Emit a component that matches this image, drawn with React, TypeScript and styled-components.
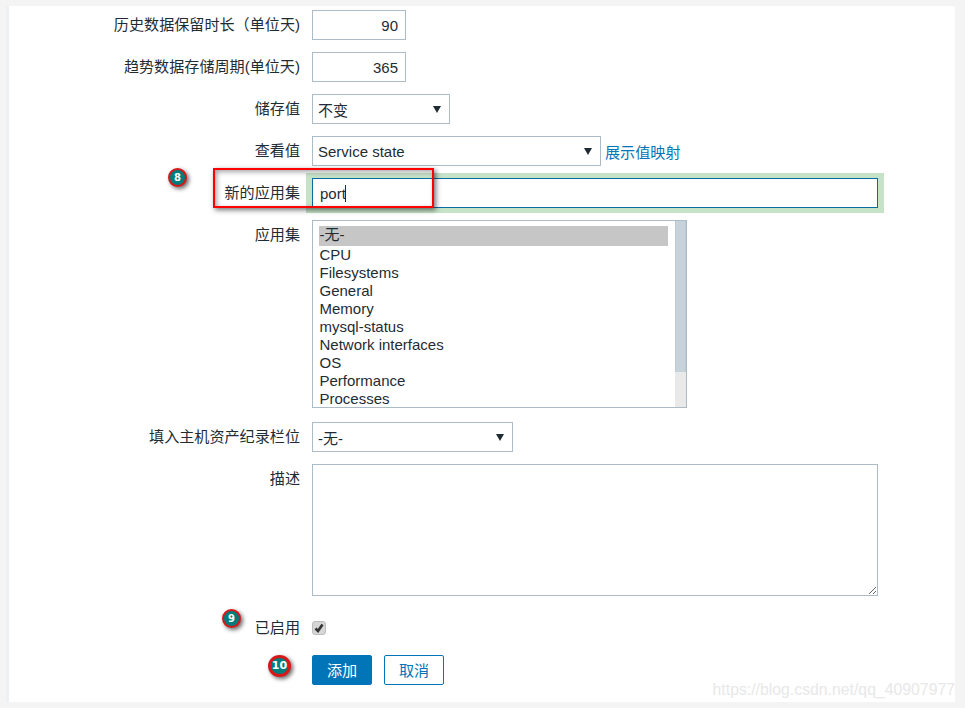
import React from "react";
import styled, { createGlobalStyle } from "styled-components";

const GlobalStyle = createGlobalStyle`
html, body {
    margin: 0;
    padding: 0;
    background: #f4f4f4;
}
body {
    font-family: "Liberation Sans", "Noto Sans CJK SC", sans-serif;
    font-size: 15px;
    color: #1f2c33;
}
input, textarea {
    font-family: inherit;
    font-size: inherit;
    color: inherit;
}
`;

const Page = styled.div`
width: 965px;
height: 708px;
box-sizing: border-box;
padding: 6px 10px 6px 6px;
overflow: hidden;
`;

const Card = styled.div`
position: relative;
height: 696px;
box-sizing: border-box;
background: #fff;
border-left: 3px solid #eef1f3;
padding-top: 4px;
display: flex;
flex-direction: column;
gap: 12px;
`;

const Row = styled.div<{ $top?: number; $bottom?: number }>`
display: grid;
grid-template-columns: 303px 1fr;
margin-top: ${props => props.$top || 0}px;
margin-bottom: ${props => props.$bottom || 0}px;
`;

const Label = styled.label<{ $drop?: number }>`
font-size: 15.1px;
line-height: 30px;
text-align: right;
padding-right: 12px;
padding-top: ${props => props.$drop || 0}px;
white-space: nowrap;
`;

const Field = styled.div`
display: flex;
align-items: center;
gap: 4px;
`;

const NumberInput = styled.input`
width: 94px;
height: 30px;
box-sizing: border-box;
border: 1px solid #acbbc5;
padding: 0 7px;
text-align: right;
outline: none;
`;

const SelectBox = styled.div<{ $width: number }>`
width: ${props => props.$width}px;
height: 30px;
box-sizing: border-box;
border: 1px solid #acbbc5;
padding: 0 8px 0 5px;
display: flex;
align-items: center;
justify-content: space-between;
`;

const Arrow = styled.svg`
width: 8px;
height: 7px;
fill: #1f2c33;
`;

const ValueLink = styled.a`
color: #0275b8;
text-decoration: none;
font-size: 15.1px;
`;

const FocusWrap = styled.div`
position: relative;
width: 566px;
`;

const FocusInput = styled.input`
display: block;
width: 100%;
height: 30px;
box-sizing: border-box;
border: 1px solid #0a6aa1;
padding: 0 7px;
outline: none;
box-shadow: 1px 0 0 5px #c6e2c7, -1px 0 0 5px #c6e2c7;
border-radius: 0;
`;

const Caret = styled.span`
position: absolute;
left: 33px;
top: 7px;
width: 1px;
height: 17px;
background: #1f2c33;
`;

const ListBox = styled.div`
width: 375px;
height: 188px;
box-sizing: border-box;
border: 1px solid #acbbc5;
display: flex;
overflow: hidden;
`;

const OptionList = styled.div`
flex: 1;
padding: 5px 7px 0 6px;
`;

const Option = styled.div<{ $selected?: boolean }>`
line-height: 18px;
white-space: nowrap;
padding-left: 0.5px;
background: ${props => props.$selected ? "#c6c6c6" : "transparent"};
height: ${props => props.$selected ? "20px" : "18px"};
`;

const ScrollTrack = styled.div`
width: 11px;
background: #e9e9e9;
`;

const ScrollThumb = styled.div`
height: 151px;
box-sizing: border-box;
background: #c8d2da;
border-right: 1px solid #bccad3;
border-left: 1px solid #bccad3;
`;

const Notes = styled.textarea`
display: block;
width: 566px;
height: 132px;
box-sizing: border-box;
border: 1px solid #acbbc5;
outline: none;
padding: 5px;
resize: both;
`;

const CheckBox = styled.div`
width: 14px;
height: 14px;
box-sizing: border-box;
border: 1px solid #bdbdbd;
border-radius: 3px;
background: #d6d6d6;
display: flex;
align-items: center;
justify-content: center;
`;

const CheckMark = styled.svg`
width: 10px;
height: 10px;
fill: none;
stroke: #333;
stroke-width: 2.6;
`;

const Button = styled.button<{ $primary?: boolean }>`
width: 60px;
height: 30px;
box-sizing: border-box;
border: 1px solid #0275b8;
border-radius: 2px;
font-family: inherit;
font-size: 15.1px;
padding: 0 0 2px;
background: ${props => props.$primary ? "#0275b8" : "#fff"};
color: ${props => props.$primary ? "#fff" : "#0275b8"};
`;

const Buttons = styled.div`
display: flex;
gap: 12px;
`;

const RedBox = styled.div`
position: absolute;
left: 204px;
top: 162px;
width: 221px;
height: 40px;
box-sizing: border-box;
border: 2px solid #f00;
box-shadow: 2px 2px 5px rgba(0, 0, 0, 0.55), inset 2px 2px 5px rgba(0, 0, 0, 0.35);
`;

const Badge = styled.div<{ $left: number; $top: number; $large?: boolean }>`
position: absolute;
left: ${props => props.$left}px;
top: ${props => props.$top}px;
width: ${props => props.$large ? 23 : 19}px;
height: ${props => props.$large ? 22 : 19}px;
box-sizing: border-box;
border: ${props => props.$large ? 3 : 2}px solid #d81818;
border-radius: 50%;
background: #007c7c;
color: #fff;
font-family: "DejaVu Sans", sans-serif;
font-size: ${props => props.$large ? 11 : 10}px;
font-weight: bold;
line-height: ${props => props.$large ? 16 : 15}px;
text-align: center;
box-shadow: 2px 2px 4px rgba(0, 0, 0, 0.6);
`;

const Watermark = styled.div`
position: absolute;
right: 0;
bottom: 3px;
font-size: 15.8px;
color: #e8e8e8;
white-space: nowrap;
`;

const apps = ["CPU", "Filesystems", "General", "Memory", "mysql-status", "Network interfaces", "OS", "Performance", "Processes"];

const DownArrow = () => (
    <Arrow viewBox="0 0 8 7"><path d="M0 0h8L4 7z" /></Arrow>
);

const App = () => {
    return (
        <Page>
            <GlobalStyle />
            <Card>
                <Row>
                    <Label>历史数据保留时长（单位天)</Label>
                    <Field><NumberInput readOnly defaultValue="90" /></Field>
                </Row>
                <Row>
                    <Label>趋势数据存储周期(单位天)</Label>
                    <Field><NumberInput readOnly defaultValue="365" /></Field>
                </Row>
                <Row>
                    <Label>储存值</Label>
                    <Field><SelectBox $width={138}>不变<DownArrow /></SelectBox></Field>
                </Row>
                <Row>
                    <Label>查看值</Label>
                    <Field>
                        <SelectBox $width={289}>Service state<DownArrow /></SelectBox>
                        <ValueLink href="#">展示值映射</ValueLink>
                    </Field>
                </Row>
                <Row>
                    <Label>新的应用集</Label>
                    <FocusWrap>
                        <FocusInput readOnly defaultValue="port" />
                        <Caret />
                    </FocusWrap>
                </Row>
                <Row $bottom={2}>
                    <Label>应用集</Label>
                    <ListBox>
                        <OptionList>
                            <Option $selected>-无-</Option>
                            {apps.map((app: string) => (
                                <Option key={app}>{app}</Option>
                            ))}
                        </OptionList>
                        <ScrollTrack><ScrollThumb /></ScrollTrack>
                    </ListBox>
                </Row>
                <Row>
                    <Label>填入主机资产纪录栏位</Label>
                    <Field><SelectBox $width={201}>-无-<DownArrow /></SelectBox></Field>
                </Row>
                <Row>
                    <Label>描述</Label>
                    <div><Notes /></div>
                </Row>
                <Row $top={4}>
                    <Label $drop={1}>已启用</Label>
                    <Field>
                        <CheckBox>
                            <CheckMark viewBox="0 0 10 10"><path d="M1.5 5.5L4 8l4.5-6.5" /></CheckMark>
                        </CheckBox>
                    </Field>
                </Row>
                <Row>
                    <span />
                    <Buttons>
                        <Button $primary>添加</Button>
                        <Button>取消</Button>
                    </Buttons>
                </Row>

                <RedBox />
                <Badge $left={159} $top={162}>8</Badge>
                <Badge $left={213} $top={603}>9</Badge>
                <Badge $left={259} $top={649} $large>10</Badge>
                <Watermark>https://blog.csdn.net/qq_40907977</Watermark>
            </Card>
        </Page>
    );
};

export default App;
